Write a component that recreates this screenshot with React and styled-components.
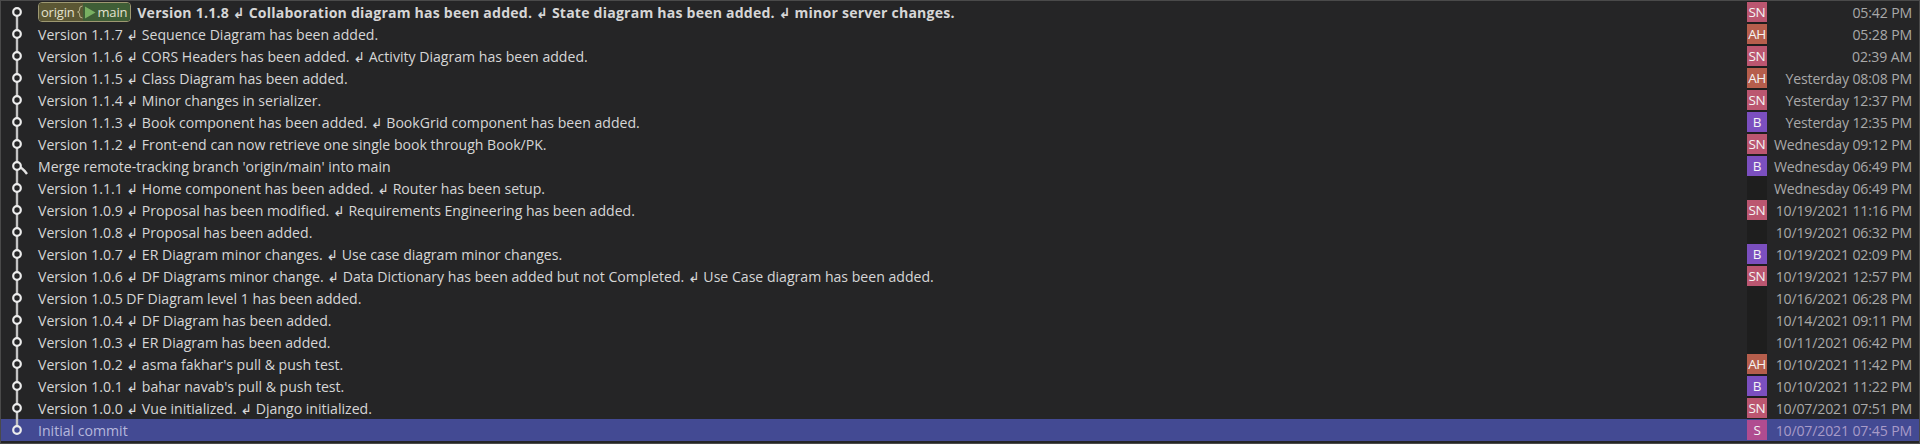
import React from 'react'
import styled, { createGlobalStyle } from 'styled-components'

const Global = createGlobalStyle`
  html, body { margin: 0; padding: 0; background: #252526; }
  body { font-family: "Open Sans", "Noto Sans", "DejaVu Sans", sans-serif; }
`

const commits = [
  { msg: 'Version 1.1.8 ↲ Collaboration diagram has been added. ↲ State diagram has been added. ↲ minor server changes.', who: 'SN', when: '05:42 PM', head: true },
  { msg: 'Version 1.1.7 ↲ Sequence Diagram has been added.', who: 'AH', when: '05:28 PM' },
  { msg: 'Version 1.1.6 ↲ CORS Headers has been added. ↲ Activity Diagram has been added.', who: 'SN', when: '02:39 AM' },
  { msg: 'Version 1.1.5 ↲ Class Diagram has been added.', who: 'AH', when: 'Yesterday 08:08 PM' },
  { msg: 'Version 1.1.4 ↲ Minor changes in serializer.', who: 'SN', when: 'Yesterday 12:37 PM' },
  { msg: 'Version 1.1.3 ↲ Book component has been added. ↲ BookGrid component has been added.', who: 'B', when: 'Yesterday 12:35 PM' },
  { msg: 'Version 1.1.2 ↲ Front-end can now retrieve one single book through Book/PK.', who: 'SN', when: 'Wednesday 09:12 PM' },
  { msg: "Merge remote-tracking branch 'origin/main' into main", who: 'B', when: 'Wednesday 06:49 PM', merge: true },
  { msg: 'Version 1.1.1 ↲ Home component has been added. ↲ Router has been setup.', who: null, when: 'Wednesday 06:49 PM' },
  { msg: 'Version 1.0.9 ↲ Proposal has been modified. ↲ Requirements Engineering has been added.', who: 'SN', when: '10/19/2021 11:16 PM' },
  { msg: 'Version 1.0.8 ↲ Proposal has been added.', who: null, when: '10/19/2021 06:32 PM' },
  { msg: 'Version 1.0.7 ↲ ER Diagram minor changes. ↲ Use case diagram minor changes.', who: 'B', when: '10/19/2021 02:09 PM' },
  { msg: 'Version 1.0.6 ↲ DF Diagrams minor change. ↲ Data Dictionary has been added but not Completed. ↲ Use Case diagram has been added.', who: 'SN', when: '10/19/2021 12:57 PM' },
  { msg: 'Version 1.0.5 DF Diagram level 1 has been added.', who: null, when: '10/16/2021 06:28 PM' },
  { msg: 'Version 1.0.4 ↲ DF Diagram has been added.', who: null, when: '10/14/2021 09:11 PM' },
  { msg: 'Version 1.0.3 ↲ ER Diagram has been added.', who: null, when: '10/11/2021 06:42 PM' },
  { msg: "Version 1.0.2 ↲ asma fakhar's pull & push test.", who: 'AH', when: '10/10/2021 11:42 PM' },
  { msg: "Version 1.0.1 ↲ bahar navab's pull & push test.", who: 'B', when: '10/10/2021 11:22 PM' },
  { msg: 'Version 1.0.0 ↲ Vue initialized. ↲ Django initialized.', who: 'SN', when: '10/07/2021 07:51 PM' },
  { msg: 'Initial commit', who: 'S', when: '10/07/2021 07:45 PM', selected: true },
]

const avatarColors = {
  SN: '#bb5670',
  AH: '#b65e4c',
  B: '#7b4fbf',
  S: '#b04c90',
}

const Frame = styled.div`
  box-sizing: border-box;
  width: 1920px;
  height: 444px;
  border: 1px solid #4a4a4a;
  background: #252526;
  overflow: hidden;
`

const Row = styled.div`
  display: grid;
  grid-template-columns: 30px 1fr 20px 152px;
  height: 22px;
  align-items: center;
  background: ${p => (p.$selected ? '#434a93' : 'transparent')};
  color: ${p => (p.$selected ? '#b6b8dc' : '#d6d6d6')};
  font-size: 14.1px;
`

const GraphCell = styled.div`
  height: 22px;
  svg { display: block; }
`

const Message = styled.div`
  display: flex;
  align-items: center;
  gap: 6px;
  padding-left: 7px;
  white-space: nowrap;
  overflow: hidden;
  font-weight: ${p => (p.$bold ? 700 : 400)};
  letter-spacing: ${p => (p.$bold ? '0.2px' : '0')};
`

const AvatarCell = styled.div`
  height: 22px;
  display: flex;
  align-items: center;
  background: ${p => (p.$selected ? 'transparent' : '#1e1e1e')};
`

const Avatar = styled.div`
  width: 20px;
  height: 20px;
  display: flex;
  align-items: center;
  justify-content: center;
  background: ${p => p.$color};
  color: #f4f4f4;
  font-size: 13.5px;
  letter-spacing: -0.4px;
`

const When = styled.div`
  text-align: right;
  padding-right: 7px;
  white-space: nowrap;
  letter-spacing: -0.15px;
  color: ${p => (p.$selected ? '#a89bc8' : '#a9a9a9')};
`

const Badge = styled.span`
  display: inline-flex;
  height: 18px;
  border: 1px solid #9d9871;
  border-radius: 4px;
  overflow: hidden;
  font-weight: 400;
  font-size: 13px;
  letter-spacing: -0.2px;
  color: #e4e2cf;
`

const BadgePart = styled.span`
  display: inline-flex;
  align-items: center;
  gap: 2px;
  padding: ${p => p.$pad};
  background: ${p => p.$bg};
`

function Graph({ first, last, merge, fill }) {
  return (
    <svg width="30" height="22">
      {!first && <line x1="16" y1="0" x2="16" y2="11" stroke="#c4c4c4" strokeWidth="2.4" />}
      {!last && <line x1="16" y1="11" x2="16" y2="22" stroke="#c4c4c4" strokeWidth="2.4" />}
      {merge && <path d="M16 11 Q21 12 26 19" fill="none" stroke="#e2e2e2" strokeWidth="2.4" />}
      <circle cx="16" cy="11" r="3.8" fill={fill} stroke="#ececec" strokeWidth="2.2" />
    </svg>
  )
}

function BranchBadge() {
  return (
    <Badge>
      <BadgePart $bg="#5b5734" $pad="0 0 0 2px">origin
        <svg width="6" height="14" viewBox="0 0 6 14">
          <path d="M5.5 1 Q2 1 2.5 5 Q2.5 7 0.5 7 Q2.5 7 2.5 9 Q2 13 5.5 13" fill="none" stroke="#b8b48c" strokeWidth="1" />
        </svg>
      </BadgePart>
      <BadgePart $bg="#3f5e36" $pad="0 3px 0 1px">
        <svg width="12" height="13" viewBox="0 0 12 13">
          <path d="M1 0.5 L11.5 6.5 L1 12.5 Z" fill="#79b062" />
        </svg>
        main
      </BadgePart>
    </Badge>
  )
}

export default function App() {
  return (
    <>
      <Global />
      <Frame>
        {commits.map((c, i) => (
          <Row key={i} $selected={c.selected}>
            <GraphCell>
              <Graph
                first={i === 0}
                last={i === commits.length - 1}
                merge={c.merge}
                fill={c.selected ? '#434a93' : '#252526'}
              />
            </GraphCell>
            <Message $bold={c.head}>
              {c.head && <BranchBadge />}
              <span>{c.msg}</span>
            </Message>
            <AvatarCell $selected={c.selected}>
              {c.who && <Avatar $color={avatarColors[c.who]}>{c.who}</Avatar>}
            </AvatarCell>
            <When $selected={c.selected}>{c.when}</When>
          </Row>
        ))}
      </Frame>
    </>
  )
}
